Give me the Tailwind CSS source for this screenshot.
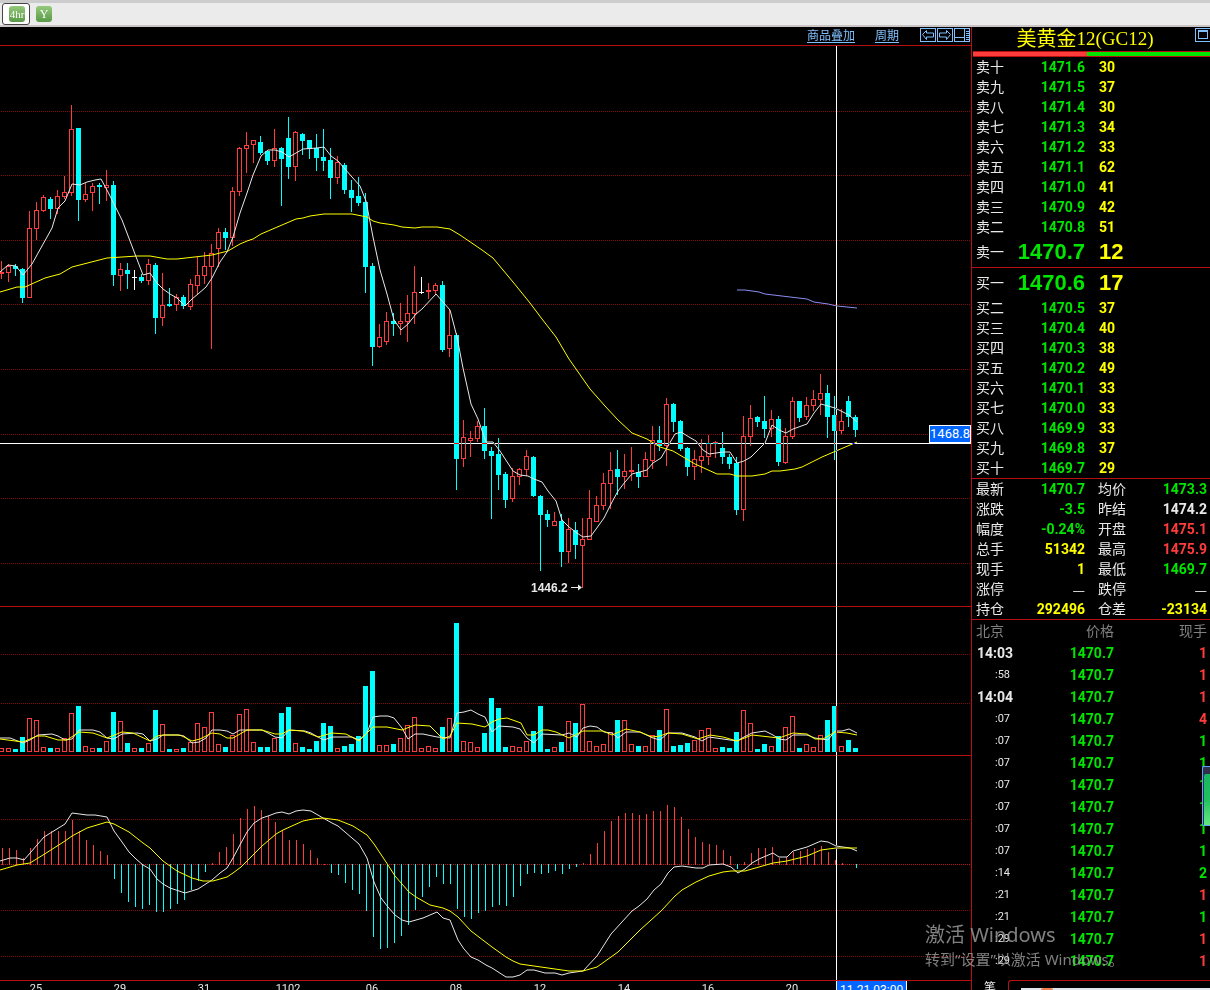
<!DOCTYPE html>
<html lang="zh-CN">
<head>
<meta charset="utf-8">
<title>美黄金12(GC12)</title>
<script src="https://cdn.jsdelivr.net/npm/@tailwindcss/browser@4"></script>
</head>
<body class="flex h-screen flex-col overflow-hidden bg-black text-[14px] text-[#e8e8e8] [font-family:Roboto,'Noto_Sans_CJK_SC',sans-serif]">

<header class="flex h-[27px] shrink-0 items-start gap-1.5 border-t-[3px] border-b-2 border-t-[#cccccc] border-b-[#cac4c4] bg-[#ebebeb] px-0.5">
  <button type="button" aria-label="4hr" class="flex h-[22px] w-7 items-center justify-center rounded-[3px] border border-[#444444] bg-white pl-0.5">
    <span class="flex size-4 items-center justify-center rounded-[3px] bg-linear-to-b from-[#94c97c] to-[#589946] text-[11px] leading-4 text-white [font-family:'Liberation_Serif',serif]">4hr</span>
  </button>
  <button type="button" aria-label="Y" class="mt-[3px] flex size-4 items-center justify-center rounded-[3px] bg-linear-to-b from-[#94c97c] to-[#589946] text-[12px] leading-4 text-white [font-family:'Liberation_Serif',serif]">Y</button>
</header>

<div class="flex min-h-0 flex-1">
  <main class="flex min-w-0 flex-1 flex-col">
    <nav class="flex h-[19px] shrink-0 items-start justify-end border-b border-[#b81010] pr-px text-[12px] leading-[18px] text-[#80c0ff]">
      <a href="#overlay" class="mr-5 underline underline-offset-2">商品叠加</a>
      <a href="#period" class="mr-[21px] underline underline-offset-2">周期</a>
      <div class="flex gap-px pt-px">
        <button type="button" aria-label="向左"><svg class="block" width="16" height="14" viewBox="0 0 16 14" fill="none" stroke="#80c0ff" shape-rendering="crispEdges"><path d="M.5.5h15v13H.5z"/><path shape-rendering="auto" d="M2.500 6.500l4-4v2.500h7v4h-7v2.500z"/></svg></button>
        <button type="button" aria-label="向右"><svg class="block" width="16" height="14" viewBox="0 0 16 14" fill="none" stroke="#80c0ff" shape-rendering="crispEdges"><path d="M.5.5h15v13H.5z"/><path shape-rendering="auto" d="M13.500 6.500l-4-4v2.500h-7v4h7v2.500z"/></svg></button>
        <button type="button" aria-label="布局"><svg class="block" width="16" height="14" viewBox="0 0 16 14" fill="none" stroke="#80c0ff" shape-rendering="crispEdges"><path d="M.5.5h15v13H.5zM10.500.5v13M.5 9.500h10M12 3.500h3M12 5.500h3M12 7.500h3M12 9.500h3M12 11.500h3"/></svg></button>
      </div>
    </nav>
    <div class="relative min-h-0 flex-1">
      <svg id="chart" class="block size-full" viewBox="0 46 971 934" preserveAspectRatio="none" role="img" aria-label="K线图"></svg>
      <span class="absolute top-[534px] left-[531px] text-[12px] leading-4 font-bold [font-family:'Liberation_Sans',sans-serif]">1446.2</span>
      <span class="absolute top-[379px] right-0 border border-white bg-[#0066ff] text-[13px] leading-4 text-white">1468.8</span>
    </div>
    <footer class="relative h-2.5 shrink-0 overflow-hidden border-t border-[#b81010]">
      <div id="axis" class="-ml-1.5 flex pt-0.5 text-[11px] leading-3"></div>
      <span class="absolute top-0 left-[836px] border-x border-white bg-[#0066ff] px-[3px] text-[12px] leading-[18px] text-white">11-21 03:00</span>
    </footer>
  </main>

  <aside class="relative flex w-[239px] shrink-0 flex-col border-l border-[#b81010]">
    <h1 class="flex h-6 shrink-0 items-center justify-center pr-3 text-[20px] leading-[26px] text-[#ffff00]">美黄金<span class="text-[19px] [font-family:'Liberation_Serif',serif]">12(GC12)</span></h1>
    <button type="button" aria-label="还原" class="absolute top-px -right-px"><svg class="block" width="16" height="14" viewBox="0 0 16 14" fill="none" stroke="#80c0ff" shape-rendering="crispEdges"><path d="M.5.5h15v13H.5zM3.500 2.500h9v8h-9zM3.500 3.500h9"/></svg></button>
    <div class="ml-px flex h-1.5 shrink-0 border-y border-[#b81010]"><span class="w-[48%] bg-[#ff3c3c]"></span><span class="flex-1 bg-[#00e600]"></span></div>
    <table class="w-full table-fixed"><colgroup><col class="w-[45px]"><col class="w-[68px]"><col></colgroup><tbody id="asks"></tbody></table>
    <table class="w-full table-fixed border-y border-[#b81010]"><colgroup><col class="w-[45px]"><col class="w-[68px]"><col></colgroup><tbody id="bids"></tbody></table>
    <table class="w-full table-fixed border-b border-[#b81010]"><colgroup><col class="w-[45px]"><col class="w-[68px]"><col class="w-[56px]"><col></colgroup><tbody id="stats"></tbody></table>
    <table class="w-full table-fixed">
      <colgroup><col class="w-[60px]"><col class="w-[82px]"><col></colgroup>
      <thead><tr class="h-[22px] leading-[22px] text-[#808080]"><th class="p-0 pl-1 text-left font-normal">北京</th><th class="p-0 text-right font-normal">价格</th><th class="p-0 pr-[3px] text-right font-normal">现手</th></tr></thead>
      <tbody id="ticks"></tbody>
    </table>
    <div class="mt-auto flex h-2.5 shrink-0 overflow-hidden">
      <button type="button" class="h-4 w-9 shrink-0 text-[12px] leading-4">笔</button>
      <div class="h-4 flex-1 rounded-tl-[3px] border-t border-l border-[#b81010] pt-[7px] pl-3"><div class="flex h-2 bg-[#dfe6ee] pl-5"><span class="h-1 w-3 rounded-full bg-[#f08050]"></span></div></div>
    </div>
    <div class="absolute top-[739px] right-0 h-[60px] w-2 rounded-l-[2px] border-y border-l border-[#60a0ff] bg-[#30304a] pt-[7px] pl-px"><div class="h-full rounded-tl-xs bg-linear-to-b from-[#18b860] via-[#20c060] to-[#60e880]"></div></div>
  </aside>
</div>

<div class="pointer-events-none fixed right-[85px] bottom-[21px] w-[200px] whitespace-nowrap text-[#a0a0a0]/80 [font-family:'Noto_Sans','Noto_Sans_CJK_SC',sans-serif]">
  <p class="text-[20px] leading-7">激活 Windows</p>
  <p class="text-[15px] leading-5">转到“设置”以激活 Windows。</p>
</div>

<script>
// Candles: kind (r up, c down, w doji), high, body top, body bottom, low, volume top, MACD bar end
const candles = `r 261 272 274 279 748 848|r 264 266 273 282 748 848|c 264 266 269 276 749 850|c 268 269 298 303 737 858|r 211 228 298 298 718 848|r 202 210 229 240 720 839|r 195 197 211 212 747 831|c 197 199 209 219 748 831|r 190 196 209 214 748 831|r 176 192 197 199 738 831|r 105 129 193 196 713 820|c 128 128 200 221 706 831|r 183 194 200 202 746 840|r 183 186 193 211 748 845|c 183 185 187 204 748 851|r 170 185 188 201 741 855|c 181 185 275 286 712 879|r 263 269 276 291 721 893|c 263 270 274 289 743 902|w 270 277 278 290 748 907|c 274 277 281 283 748 909|r 259 264 281 285 743 905|c 263 265 318 334 710 912|r 273 305 318 326 724 912|c 288 304 306 307 749 909|r 294 297 305 311 749 904|c 295 297 306 309 748 900|r 279 284 307 310 742 890|r 257 275 286 294 723 881|r 252 266 276 284 727 872|r 244 253 267 349 712 863|r 228 232 249 267 744 852|c 228 232 238 250 747 847|r 187 191 238 246 735 834|r 147 148 192 196 714 818|r 132 145 149 173 709 809|r 140 140 145 163 742 806|c 136 142 153 155 747 810|c 151 151 161 165 747 816|r 129 148 161 167 738 822|c 147 148 159 206 713 830|c 117 138 167 179 707 840|r 131 132 167 181 743 840|c 133 134 141 155 747 844|c 140 140 149 159 749 850|c 134 148 158 171 741 858|c 129 157 161 171 723 864|c 148 160 178 199 726 873|r 156 162 178 184 748 875|c 163 165 190 194 746 883|c 180 190 198 212 744 890|c 177 196 203 206 736 894|c 193 202 267 293 686 911|c 263 266 347 366 671 937|r 324 337 347 348 745 949|r 312 321 342 345 745 948|c 313 321 324 336 744 943|r 303 321 324 335 738 936|r 295 313 322 342 725 925|r 266 292 314 324 717 910|w 277 292 293 294 748 897|r 283 290 292 299 746 887|r 283 285 291 294 748 877|c 281 285 350 352 727 884|r 309 335 349 357 718 884|c 333 335 459 490 623 909|r 420 437 459 467 741 917|r 431 438 441 457 742 919|r 421 426 439 442 747 913|c 408 426 451 459 733 911|c 447 451 456 519 698 907|c 438 454 475 490 708 905|c 472 474 500 508 747 906|r 468 476 499 502 746 897|r 468 469 477 485 747 886|r 450 456 470 476 741 874|c 456 457 496 497 731 873|c 495 496 515 571 706 874|c 510 514 520 527 749 873|r 512 521 526 526 747 871|c 514 521 552 567 742 874|r 518 529 552 563 721 869|c 522 530 545 559 723 867|r 518 539 546 588 704 863|r 490 518 540 540 741 854|r 496 505 522 522 746 843|r 473 483 506 510 744 831|r 452 470 484 509 732 821|c 450 469 477 495 720 816|r 454 471 477 489 720 813|r 447 470 472 481 744 813|c 464 472 477 488 746 815|r 452 459 477 477 746 814|r 426 440 461 469 735 811|c 426 440 446 451 730 811|r 398 404 446 466 709 805|c 403 404 422 432 746 807|c 420 421 449 451 745 817|c 447 448 467 476 743 829|r 450 459 467 480 740 837|r 439 456 461 473 730 842|r 435 443 457 465 728 844|r 441 442 444 458 748 845|c 432 448 457 464 747 850|c 454 457 464 469 748 856|c 457 463 510 515 732 869|r 416 436 510 521 710 862|r 405 418 437 446 723 853|c 416 417 422 427 749 848|c 396 421 429 438 744 848|r 410 419 429 437 746 847|c 416 419 462 466 736 858|r 428 436 463 464 727 857|r 397 401 437 439 716 852|c 401 401 418 422 748 851|r 397 405 417 420 744 849|r 390 399 406 411 747 848|r 374 393 400 415 735 846|c 385 393 417 438 720 852|c 396 415 431 460 706 860|r 409 421 431 434 746 863|c 396 401 417 427 740 864|c 415 417 430 437 748 868`.split('|').map(s => s.split(' '));
const colors = { r: '#ff3c3c', c: '#00ffff', w: '#ffffff' };

const curves = [
  ['#ffff00', '0,292 17,287 25,287 45,278 60,274 72,267 107,258 137,256 150,256 167,259 177,259 212,255 228,251 240,244 247,241 253,239 261,234 296,219 303,218 310,216 324,214 352,214 367,217 373,221 380,223 394,225 402,227 415,228 422,227 437,227 450,229 460,235 482,250 493,258 513,282 530,303 542,319 556,337 569,359 590,389 605,406 618,420 632,433 647,439 660,447 673,451 695,464 717,474 730,474 737,476 752,476 765,474 772,471 780,471 795,469 802,467 814,461 822,457 857,442'],
  ['#e8e8e8', '0,272 8,265 16,266 23,275 32,264 52,228 58,208 65,201 72,184 80,185 87,182 95,180 101,179 108,192 122,220 143,275 150,273 157,283 163,289 170,294 177,298 185,306 192,299 198,294 206,287 212,278 220,262 227,252 233,237 240,213 247,193 253,175 261,156 268,150 275,150 282,152 289,157 296,153 303,149 317,148 324,147 331,156 338,161 345,169 352,177 360,186 366,201 373,237 380,270 387,294 394,320 401,330 408,324 416,314 422,309 436,294 450,310 457,337 463,368 471,404 478,419 486,442 493,442 500,451 513,471 520,475 528,476 534,479 542,482 548,491 556,501 562,520 569,527 577,533 583,537 591,536 604,518 612,502 618,491 625,482 632,474 647,470 653,463 661,458 668,446 675,434 681,432 689,437 696,441 703,450 709,454 723,452 730,452 737,463 744,461 751,457 765,443 772,425 779,430 786,433 793,429 807,424 814,413 821,404 835,408 849,415 857,422'],
  ['#8c8cf0', '737,290 745,290 759,292 765,294 807,299 814,302 828,304 837,306 857,308'],
  ['#e8e8e8', '0,738 10,738 23,743 30,740 38,735 52,734 58,736 65,740 72,739 79,730 93,730 100,732 107,738 114,739 122,734 137,733 143,734 150,741 157,739 163,735 177,735 184,736 192,743 199,742 206,738 212,730 220,730 227,731 233,734 240,730 262,730 268,733 275,737 282,738 289,730 305,731 311,733 318,737 324,740 332,737 352,737 359,740 367,733 373,717 380,716 388,716 394,718 402,728 408,739 415,734 423,734 437,737 450,738 457,713 464,712 471,710 478,714 485,717 492,732 499,726 513,727 520,729 527,738 534,743 542,734 562,735 569,733 577,737 583,728 590,726 597,727 604,732 612,733 618,738 626,732 640,732 653,738 660,740 668,733 682,733 695,737 702,741 709,737 737,741 744,737 752,733 765,731 773,735 779,739 786,740 793,735 807,735 815,738 828,740 835,731 842,731 849,729 857,733'],
  ['#ffff00', '0,739 23,742 37,736 45,736 58,740 67,740 79,732 93,733 107,738 122,732 133,733 150,741 157,736 163,735 180,735 192,741 200,739 212,733 220,734 227,738 233,738 247,730 262,730 275,734 282,734 289,730 303,731 318,737 332,733 346,734 359,741 373,727 387,727 402,730 415,725 430,726 437,733 443,739 450,736 457,723 472,724 485,727 492,722 499,719 507,718 521,723 527,735 534,735 542,730 548,730 556,732 569,738 583,731 603,731 612,735 626,729 640,732 652,737 660,736 668,733 682,734 698,739 710,735 723,737 737,741 752,735 779,738 793,733 807,734 815,739 823,739 835,732 847,733 857,735'],
  ['#e8e8e8', '0,861 10,858 17,858 24,860 44,837 65,824 72,813 87,815 95,815 107,817 114,831 122,842 129,852 136,859 143,865 150,869 157,879 163,884 170,888 185,893 198,889 212,880 220,873 227,868 233,858 241,843 247,832 254,823 262,818 268,816 276,813 282,812 289,814 296,811 303,810 311,811 323,818 332,823 338,826 359,844 367,858 374,882 381,898 388,907 395,915 402,920 409,922 423,918 437,912 443,918 450,920 458,940 464,949 471,957 478,960 486,965 492,968 506,977 513,977 520,975 527,970 534,970 545,973 555,973 562,975 569,973 583,971 597,956 611,934 632,911 639,906 647,899 654,890 661,884 668,873 674,867 682,866 696,868 703,868 709,865 723,864 731,867 738,873 745,869 752,863 759,859 773,853 779,857 787,857 793,851 807,847 821,841 828,842 836,846 850,848 857,851'],
  ['#ffff00', '0,870 17,865 30,863 43,855 65,841 72,836 87,828 107,822 114,824 129,832 143,843 150,848 163,861 177,871 192,878 203,881 213,881 227,877 233,873 241,867 262,846 276,834 283,830 303,821 313,819 323,818 338,820 353,826 367,835 374,844 388,865 395,876 409,892 416,897 423,901 430,905 443,908 450,911 458,917 471,931 492,947 506,957 513,961 520,964 569,971 583,971 597,967 611,957 618,952 640,930 661,911 675,896 682,890 696,882 709,876 723,872 731,871 745,871 759,867 773,863 787,861 807,856 821,850 836,848 857,848']
];

let art = '<g shape-rendering="crispEdges">';
for (const y of [111, 175, 240, 304, 369, 434, 498, 563, 654, 703, 819, 864, 910, 956])
  art += `<path d="M1 ${y + .5}H971" stroke="${y === 864 ? '#c01414' : '#800808'}" stroke-dasharray="1 1"/>`;
art += '<path d="M0 606.5H971M0 755.5H971" stroke="#b81010"/>';
candles.forEach(([kind, ...n], i) => {
  const [hi, top, bot, lo, vol, macd] = n.map(Number);
  const x = 1 + 7 * i, c = colors[kind];
  art += `<path d="M${x + .5} ${hi}V${top}M${x + .5} ${bot}V${lo}" stroke="${c}"/>`;
  if (kind === 'r' && bot - top > 2) art += `<rect x="${x - 1.5}" y="${top + .5}" width="4" height="${bot - top - 1}" fill="none" stroke="${c}"/>`;
  else art += `<rect x="${x - 2}" y="${top}" width="5" height="${bot - top}" fill="${c}"/>`;
  if (kind === 'c') art += `<rect x="${x - 2}" y="${vol}" width="5" height="${752 - vol}" fill="${c}"/>`;
  else art += `<rect x="${x - 1.5}" y="${vol + .5}" width="4" height="${751 - vol}" fill="none" stroke="${colors.r}"/>`;
  art += `<path d="M${x + 1.5} ${macd < 865 ? 865 : 864}V${macd}" stroke="${macd > 864 ? colors.c : colors.r}"/>`;
});
art += '</g><g fill="none">';
for (const [c, pts] of curves) art += `<polyline points="${pts}" stroke="${c}"/>`;
art += '</g><path d="M571 587.5h8" stroke="#e8e8e8"/><path d="M578 584.500l4 3-4 3z" fill="#e8e8e8"/>';
art += '<path d="M0 443h836V46h1v397h134v1H837v536h-1V444H0z" fill="#fff" shape-rendering="crispEdges" style="mix-blend-mode:difference"/>';
document.getElementById('chart').innerHTML = art;

document.getElementById('axis').innerHTML = ['25', '29', '31', '1102', '06', '08', '12', '14', '16', '20']
  .map(t => `<span class="w-[84px] shrink-0 text-center">${t}</span>`).join('');

const bookRow = ([label, price, size], big) => big
  ? `<tr class="h-[30px] leading-[30px]"><th scope="row" class="p-0 pl-1 text-left font-normal">${label}</th><td class="p-0 text-right text-[22px] font-bold text-[#00e600] [font-family:'Liberation_Sans',sans-serif]">${price}</td><td class="p-0 pl-3.5 text-[22px] font-bold text-[#ffff00] [font-family:'Liberation_Sans',sans-serif]">${size}</td></tr>`
  : `<tr class="h-5 leading-5"><th scope="row" class="p-0 pl-1 text-left font-normal">${label}</th><td class="p-0 text-right font-bold text-[#00e600]">${price}</td><td class="p-0 pl-3.5 font-bold text-[#ffff00]">${size}</td></tr>`;
const asks = [['卖十', '1471.6', 30], ['卖九', '1471.5', 37], ['卖八', '1471.4', 30], ['卖七', '1471.3', 34], ['卖六', '1471.2', 33], ['卖五', '1471.1', 62], ['卖四', '1471.0', 41], ['卖三', '1470.9', 42], ['卖二', '1470.8', 51], ['卖一', '1470.7', 12]];
const bids = [['买一', '1470.6', 17], ['买二', '1470.5', 37], ['买三', '1470.4', 40], ['买四', '1470.3', 38], ['买五', '1470.2', 49], ['买六', '1470.1', 33], ['买七', '1470.0', 33], ['买八', '1469.9', 33], ['买九', '1469.8', 37], ['买十', '1469.7', 29]];
document.getElementById('asks').innerHTML = asks.map((r, i) => bookRow(r, i === 9)).join('');
document.getElementById('bids').innerHTML = bids.map((r, i) => bookRow(r, i === 0)).join('');

const tone = { g: 'text-[#00e600]', r: 'text-[#ff3c3c]', y: 'text-[#ffff00]', w: 'text-[#e8e8e8]' };
const weight = v => v === '—' ? "[font-family:'Noto_Sans_CJK_SC',sans-serif]" : 'font-bold';
document.getElementById('stats').innerHTML = [
  ['最新', '1470.7', 'g', '均价', '1473.3', 'g'], ['涨跌', '-3.5', 'g', '昨结', '1474.2', 'w'],
  ['幅度', '-0.24%', 'g', '开盘', '1475.1', 'r'], ['总手', '51342', 'y', '最高', '1475.9', 'r'],
  ['现手', '1', 'y', '最低', '1469.7', 'g'], ['涨停', '—', 'w', '跌停', '—', 'w'],
  ['持仓', '292496', 'y', '仓差', '-23134', 'y']
].map(([a, b, c, d, e, f]) => `<tr class="h-5 leading-5"><th scope="row" class="p-0 pl-1 text-left font-normal">${a}</th><td class="p-0 text-right ${weight(b)} ${tone[c]}">${b}</td><th scope="row" class="p-0 pl-[13px] text-left font-normal">${d}</th><td class="p-0 pr-[3px] text-right ${weight(e)} ${tone[f]}">${e}</td></tr>`).join('');

document.getElementById('ticks').innerHTML = [
  ['14:03', 1, 'r'], [':58', 1, 'r'], ['14:04', 1, 'r'], [':07', 4, 'r'], [':07', 1, 'g'], [':07', 1, 'g'], [':07', 1, 'g'], [':07', 1, 'g'],
  [':07', 1, 'g'], [':07', 1, 'g'], [':14', 2, 'g'], [':21', 1, 'r'], [':21', 1, 'g'], [':29', 1, 'r'], [':29', 1, 'r']
].map(([t, n, c]) => `<tr class="h-[22px] leading-[22px]"><td class="${t.length > 3 ? 'p-0 pl-[5px] font-bold' : 'p-0 pr-[22px] text-right text-[11px]'}">${t}</td><td class="p-0 text-right font-bold text-[#00e600]">1470.7</td><td class="p-0 pr-[3px] text-right font-bold ${tone[c]}">${n}</td></tr>`).join('');
</script>
</body>
</html>
